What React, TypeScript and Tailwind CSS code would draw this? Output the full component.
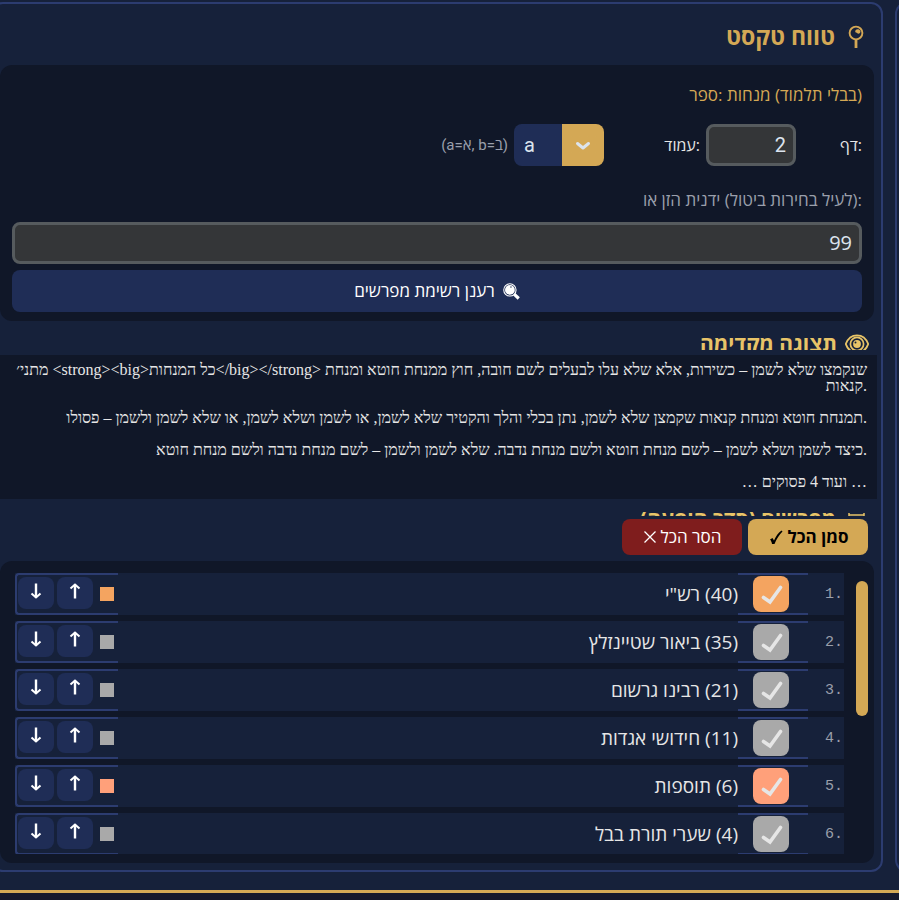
import React, { useState } from 'react';

interface Commentator {
  id: number;
  name: string;
  count: number;
  box: string;
}

const COMMENTATORS: Commentator[] = [
  { id: 1, name: 'רש"י', count: 40, box: 'bg-[#f4a460]' },
  { id: 2, name: 'ביאור שטיינזלץ', count: 35, box: 'bg-[#a9a9a9]' },
  { id: 3, name: 'רבינו גרשום', count: 21, box: 'bg-[#a9a9a9]' },
  { id: 4, name: 'חידושי אגדות', count: 11, box: 'bg-[#a9a9a9]' },
  { id: 5, name: 'תוספות', count: 6, box: 'bg-[#ffa07a]' },
  { id: 6, name: 'שערי תורת בבל', count: 4, box: 'bg-[#a9a9a9]' },
];

const PREVIEW = [
  'מתני׳ <strong><big>כל המנחות</big></strong> שנקמצו שלא לשמן – כשירות, אלא שלא עלו לבעלים לשם חובה, חוץ ממנחת חוטא ומנחת קנאות.',
  'תמנחת חוטא ומנחת קנאות שקמצן שלא לשמן, נתן בכלי והלך והקטיר שלא לשמן, או לשמן ושלא לשמן, או שלא לשמן ולשמן – פסולו.',
  'כיצד לשמן ושלא לשמן – לשם מנחת חוטא ולשם מנחת נדבה. שלא לשמן ולשמן – לשם מנחת נדבה ולשם מנחת חוטא.',
  '… ועוד 4 פסוקים …',
];

const PinIcon = () => (
  <svg className="w-4 h-6" viewBox="0 0 16 24" fill="none" stroke="currentColor" aria-hidden="true">
    <circle cx="8" cy="8" r="6.4" strokeWidth="1.9" />
    <path d="M8 14V23" strokeWidth="2.8" />
    <path d="M7.6 5.2c1-1.600 4-1.400 4.800.600.4 1.800-.9 3.200-2.600 3-.2-.9-.9-1.100-1.800-1.300-.9-.4-1-1.500-.4-2.300z" fill="currentColor" stroke="none" />
  </svg>
);

const EyeIcon = () => (
  <svg className="w-6 h-5" viewBox="0 0 24 20" fill="none" stroke="currentColor" aria-hidden="true">
    <path d="M.8 10C5 -1.600 19 -1.600 23.200 10C19 21.600 5 21.600 .8 10z" strokeWidth="1.8" />
    <circle cx="12" cy="10" r="6.600" strokeWidth="1.700" />
    <circle cx="12" cy="10" r="3.900" fill="currentColor" stroke="none" />
    <circle cx="10.500" cy="8.500" r="1" fill="#16213a" stroke="none" />
  </svg>
);

const SearchIcon = () => (
  <svg className="w-[17px] h-[17px]" viewBox="0 0 16 16" aria-hidden="true">
    <circle cx="6.500" cy="6.500" r="5.800" fill="none" stroke="white" strokeWidth="1" />
    <circle cx="6.500" cy="6.500" r="4.600" fill="white" />
    <circle cx="7.500" cy="3.800" r="0.700" fill="#1f2d56" />
    <path d="M10.500 10.500L14.800 14.600" stroke="white" strokeWidth="3" />
  </svg>
);

const ArrowIcon = ({ down = false }: { down?: boolean }) => (
  <svg
    className={down ? 'w-4 h-4 rotate-180' : 'w-4 h-4'}
    viewBox="0 0 16 16"
    fill="none"
    stroke="white"
    aria-hidden="true"
  >
    <path d="M8 15.500V1.500" strokeWidth="2.4" />
    <path d="M3.500 5.500L8 1.500L12.500 5.500" strokeWidth="2" />
  </svg>
);

const CommentatorRow = ({ item }: { item: Commentator }) => {
  const [checked, setChecked] = useState(true);
  const inputId = `commentator-${item.id}`;

  return (
    <li className="flex h-[42px] shrink-0 bg-[#16213a]">
      <div className="flex w-[103px] items-center rounded-l border-y-2 border-l-2 border-[#2c3c70] pl-px">
        <button
          aria-label="הזז למטה"
          className="mb-0.5 flex h-8 w-9 justify-center rounded-lg bg-[#1f2d56] pt-1.5"
        >
          <ArrowIcon down />
        </button>
        <button
          aria-label="הזז למעלה"
          className="mb-0.5 ml-[3px] flex h-8 w-9 justify-center rounded-lg bg-[#1f2d56] pt-1.5"
        >
          <ArrowIcon />
        </button>
        <span className={`ml-[7px] h-3.5 w-3.5 ${item.box}`} />
      </div>
      <label
        htmlFor={inputId}
        dir="rtl"
        className="flex flex-1 items-center text-[19px] text-[#e6e6e6]"
      >
        ({item.count}) {item.name}
      </label>
      <div className="grid w-[70px] items-center border-y-2 border-[#2c3c70] pl-[15px]">
        <input
          id={inputId}
          type="checkbox"
          checked={checked}
          onChange={() => setChecked(!checked)}
          className={`col-start-1 row-start-1 h-9 w-9 appearance-none rounded-lg ${item.box}`}
        />
        {checked && (
          <svg
            className="pointer-events-none col-start-1 row-start-1 h-9 w-9"
            viewBox="0 0 36 36"
            fill="none"
            stroke="#e6e6e6"
            strokeWidth="3.6"
            strokeLinecap="round"
            aria-hidden="true"
          >
            <path d="M10.500 21.500L17 26L27.500 11.500" />
          </svg>
        )}
      </div>
      <span className="flex w-9 items-center justify-end pt-0.5 pr-px font-['Liberation_Mono',monospace] text-[15px] text-[#9a9fab]">
        {item.id}.
      </span>
    </li>
  );
};

export default function App() {
  return (
    <div className="overflow-hidden bg-[#16213a] font-['Open_Sans',sans-serif]">
      <div className="-ml-[9px] flex gap-3 pt-[2px]">
        <main className="min-w-0 flex-1 rounded-xl border-2 border-[#2c3c70] pb-[7px]">
          <h2 dir="rtl" className="flex h-[61px] items-center gap-[13px] px-[17px] pt-1 text-[23px] font-bold text-[#d4a855]">
            <PinIcon />
            טווח טקסט
          </h2>

          {/* Range selection */}
          <section className="mx-[7px] rounded-xl bg-[#101728] px-3 pb-[9px]">
            <p dir="rtl" className="h-[59px] pt-[18px] text-[17px] leading-6 text-[#d4a855]">
              (בבלי תלמוד) מנחות :ספר
            </p>
            <div dir="rtl" className="flex items-center text-base text-[#e6e6e6]">
              <label htmlFor="daf" className="w-[66px]">:דף</label>
              <input
                id="daf"
                dir="ltr"
                defaultValue="2"
                className="h-[42px] w-[90px] rounded-lg border-[3px] border-[#565b5e] bg-[#343638] px-[7px] text-right font-['Roboto',sans-serif] text-xl text-[#dce4ee]"
              />
              <label htmlFor="amud" className="w-[102px] pr-[6px]">:עמוד</label>
              <div dir="ltr" className="relative">
                <select
                  id="amud"
                  defaultValue="a"
                  className="h-[42px] w-[90px] appearance-none rounded-lg bg-linear-to-r from-[#1f2d56] from-[48px] to-[#d4a855] to-[48px] pl-2.5 font-['Roboto',sans-serif] text-xl text-[#dce4ee]"
                >
                  <option>a</option>
                  <option>b</option>
                </select>
                <svg
                  className="pointer-events-none absolute top-3 right-3 h-[18px] w-[18px]"
                  viewBox="0 0 18 18"
                  fill="none"
                  stroke="#dce4ee"
                  strokeWidth="3"
                  strokeLinecap="round"
                  strokeLinejoin="round"
                  aria-hidden="true"
                >
                  <path d="M3.500 7.500L9 12L14.500 7.500" />
                </svg>
              </div>
              <span dir="ltr" className="mr-1.5 font-['Roboto','Open_Sans',sans-serif] text-[15px] text-[#9a9fab]">
                (a=א, b=ב)
              </span>
            </div>
            <label htmlFor="manual" dir="rtl" className="block h-14 pt-[22px] text-[17px] leading-6 text-[#9a9fab]">
              :(לעיל בחירות ביטול) ידנית הזן או
            </label>
            <input
              id="manual"
              defaultValue="99"
              className="block h-[42px] w-full rounded-lg border-[3px] border-[#565b5e] bg-[#343638] px-[7px] pb-0.5 text-right text-xl text-[#dce4ee]"
            />
            <button
              dir="rtl"
              className="mt-1.5 flex h-[42px] w-full items-center justify-center gap-2 rounded-lg bg-[#1f2d56] text-[17px] text-white"
            >
              <SearchIcon />
              רענן רשימת מפרשים
            </button>
          </section>

          {/* Preview */}
          <h3 dir="rtl" className="mt-[13px] flex h-4 items-start gap-2 overflow-hidden px-3 text-[21px] leading-[18px] font-bold text-[#e8c468]">
            <EyeIcon />
            תצוגה מקדימה
          </h3>
          <div className="mt-[5px] mr-1 ml-[7px] space-y-4 bg-[#101728] pt-[7px] pr-2.5 pb-[9px] pl-2.5 text-right font-['Liberation_Serif',serif] text-base leading-4 text-[#e6e6e6]">
            {PREVIEW.map((line) => (
              <p key={line}>{line}</p>
            ))}
          </div>

          {/* Commentators */}
          <h3 dir="rtl" className="mt-[13px] flex h-1 items-start gap-3 overflow-hidden px-4 text-[21px] leading-3 font-bold text-[#e8c468]">
            <svg className="h-5 w-[17px] shrink-0" viewBox="0 0 17 20" fill="none" stroke="currentColor" strokeWidth="1.500" aria-hidden="true">
              <path d="M1 1v19M16 1v19M1 3h15" />
            </svg>
            מפרשים (סדר הופעה)
          </h3>
          <div dir="rtl" className="mt-[3px] flex gap-1.5 px-[13px]">
            <button className="flex h-9 w-[120px] items-center justify-center gap-1 rounded-lg bg-[#d4a855] text-[17px] font-bold text-black">
              סמן הכל
              <svg className="h-4 w-4" viewBox="0 0 16 16" aria-hidden="true">
                <path d="M2 10.500L4.500 9L6 11.500C8 7 10 4 13.500 1.500L14.500 2.500C11.500 5.500 8.500 10 6.500 15H4C3.700 13 3 11.500 2 10.500z" />
              </svg>
            </button>
            <button className="flex h-9 w-[120px] items-center justify-center gap-1 rounded-lg bg-[#7f1d1d] text-[17px] text-white">
              הסר הכל
              <svg className="h-3.5 w-3.5" viewBox="0 0 14 14" stroke="currentColor" strokeWidth="1.3" aria-hidden="true">
                <path d="M1.500 1.500L12.500 12.500M12.500 1.500L1.500 12.500" />
              </svg>
            </button>
          </div>

          <section className="mx-[7px] mt-1.5 flex justify-between gap-3 rounded-xl bg-[#101728] pt-3 pr-1.5 pb-[9px] pl-[15px]">
            <ul className="flex h-[281px] flex-1 flex-col gap-1.5 overflow-hidden">
              {COMMENTATORS.map((item) => (
                <CommentatorRow key={item.id} item={item} />
              ))}
            </ul>
            <div className="mt-2 h-[135px] w-3 rounded-full bg-[#d4a855]" />
          </section>
        </main>
        <aside className="-mr-3 w-4 rounded-l-xl border-2 border-r-0 border-[#2c3c70]" />
      </div>
      <footer className="mt-[18px] h-[10px] border-t-[3px] border-[#d4a855] bg-[#15182c]" />
    </div>
  );
}
